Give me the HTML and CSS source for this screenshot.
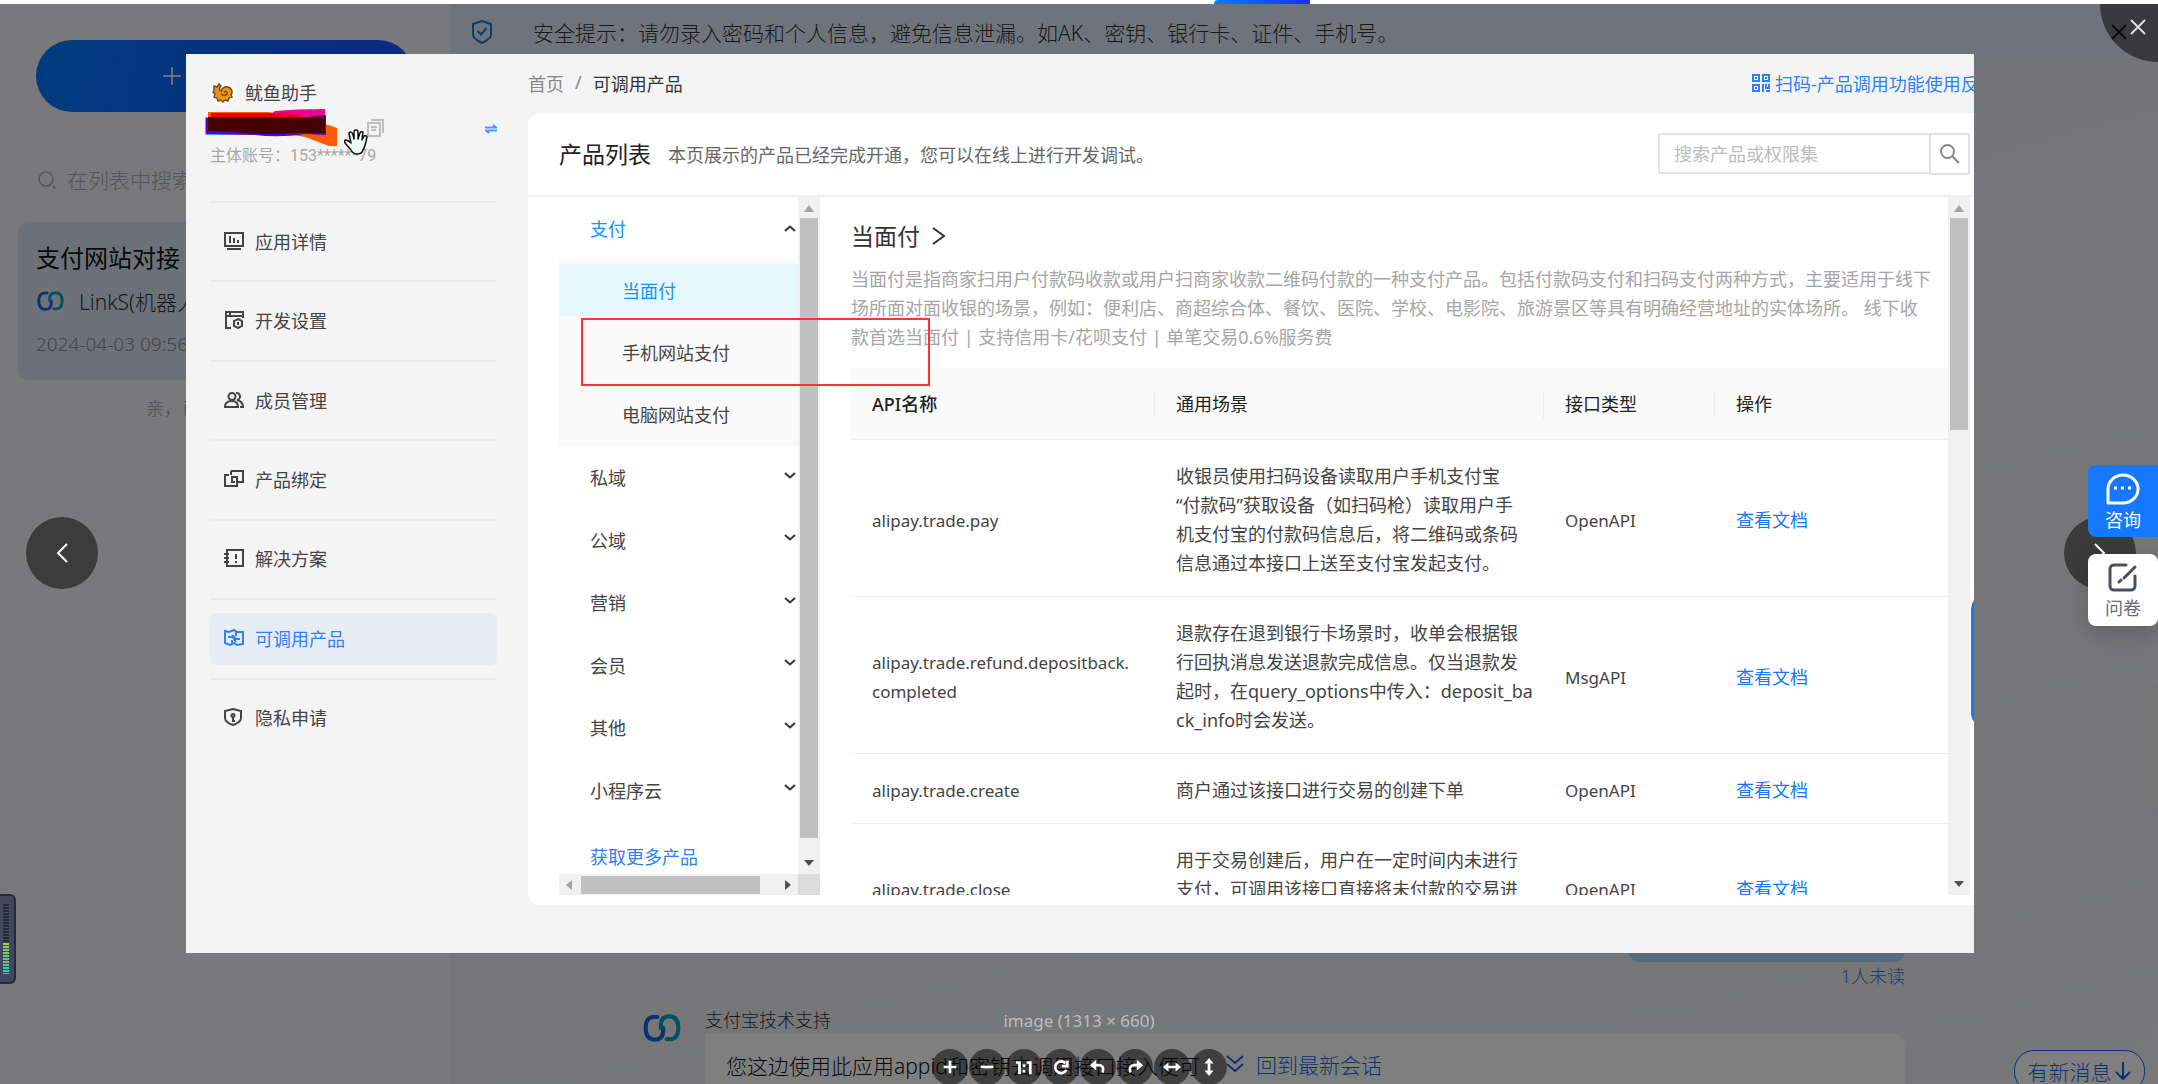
FILE: index.html
```html
<!DOCTYPE html>
<html lang="zh-CN">
<head>
<meta charset="utf-8">
<title>支付网站对接</title>
<link rel="stylesheet" href="styles.css">
</head>
<body>
<svg class="defs" aria-hidden="true">
  <symbol id="links" viewBox="0 0 32 24">
    <path d="M12 2.500Q2 1 2 12q0 10 8 10 7 0 7-8v-2" fill="none" stroke="#1268e0" stroke-width="3.500" stroke-linecap="round"/>
    <path d="M20 21.500Q30 23 30 12 30 2 22 2q-7 0-7 8v2" fill="none" stroke="#08a0c8" stroke-width="3.500" stroke-linecap="round"/>
  </symbol>
  <symbol id="chev" viewBox="0 0 12 7"><path d="M1 1l5 4.500L11 1" fill="none" stroke="currentColor" stroke-width="2"/></symbol>
</svg>

<header class="tabstrip"><span class="tab-mark"></span></header>
<div class="stage">
  <div class="app">
    <aside class="sessions">
      <button class="new-session" type="button" aria-label="新建会话"><svg viewBox="0 0 18 18" width="18" height="18"><path d="M9 0v18M0 9h18" stroke="#fff" stroke-width="1.500"/></svg></button>
      <label class="session-search">
        <svg viewBox="0 0 18 18" width="18" height="18"><path d="M15 15l2.500 2.500M15 8A7 7 0 1 1 1 8a7 7 0 0 1 14 0z" fill="none" stroke="#a8abb0" stroke-width="1.500"/></svg>
        <input type="text" placeholder="在列表中搜索" aria-label="在列表中搜索">
      </label>
      <article class="session">
        <h2>支付网站对接</h2>
        <p class="who"><span class="mini"><svg width="27" height="20"><use href="#links"/></svg></span>LinkS(机器人)</p>
        <time>2024-04-03 09:56</time>
      </article>
      <p class="list-end">亲，已经到底了</p>
    </aside>
    <main class="chat">
      <div class="notice">
        <svg viewBox="0 0 20 24" width="20" height="24"><path d="M10 1l9 3v11c0 3-5 6-9 8-4-2-9-5-9-8V4z M5.500 11l3.500 3.500L14.500 8" fill="none" stroke="#1478d8" stroke-width="2"/></svg>
        <p>安全提示：请勿录入密码和个人信息，避免信息泄漏。如AK、密钥、银行卡、证件、手机号。</p>
        <button type="button" aria-label="关闭提示"><svg viewBox="0 0 16 16" width="16" height="16"><path d="M1 1l14 14M15 1L1 15" stroke="#333" stroke-width="2"/></svg></button>
      </div>
      <div class="thread">
        <div class="mine"></div>
        <p class="unread">1人未读</p>
        <div class="msg">
          <span class="avatar"><svg width="42" height="28"><use href="#links"/></svg></span>
          <div class="msg-body">
            <p class="msg-name">支付宝技术支持</p>
            <p class="bubble">您这边使用此应用appid和密钥去调用接口接入便可</p>
          </div>
        </div>
      </div>
      <button class="latest" type="button"><svg viewBox="0 0 18 18" width="18" height="18"><path d="M1 1l8 7 8-7M1 9l8 7 8-7" fill="none" stroke="currentColor" stroke-width="2"/></svg>回到最新会话</button>
      <button class="new-msg" type="button">有新消息<svg viewBox="0 0 18 20" width="18" height="20"><path d="M9 1v17M2 11l7 7 7-7" fill="none" stroke="currentColor" stroke-width="2"/></svg></button>
      <span class="page-thumb"></span>
    </main>
  </div>

  <div class="viewer">
    <button class="viewer-close" type="button" aria-label="关闭"><svg viewBox="0 0 16 16" width="16" height="16"><path d="M1 1l14 14M15 1L1 15" stroke="#ddd" stroke-width="2"/></svg></button>
    <button class="viewer-nav prev" type="button" aria-label="上一张"><svg viewBox="0 0 12 20" width="12" height="20"><path d="M11 1L2 10l9 9" fill="none" stroke="#fff" stroke-width="2"/></svg></button>
    <button class="viewer-nav next" type="button" aria-label="下一张"><svg viewBox="0 0 12 20" width="12" height="20"><path d="M1 1l9 9-9 9" fill="none" stroke="#fff" stroke-width="2"/></svg></button>

    <section class="shot">
      <aside class="side">
        <div class="account">
          <p class="app-name"><span class="app-logo"><svg viewBox="0 0 22 20" width="22" height="20"><path d="M2 3l3 1 2-3 2 2c-2 2-2 4 0 5 1-3 4-5 7-4 4 1 5 5 3 8l1 2-3 1-1 3-3-1-2 2-2-2-3 1-1-3-3-1 1-3-2-2 1-2z" fill="#e89420" stroke="#7a4a14" stroke-width="1.500"/><path d="M12 9c2-1 4 0 3 2s-4 2-6 0" fill="none" stroke="#7a4a14" stroke-width="1.500"/></svg></span>鱿鱼助手</p>
          <div class="account-tools">
            <svg class="copy" viewBox="0 0 18 18" width="18" height="18"><path d="M4 1h12v13M1 4h12v13H1zM4 8h6M4 11h5" fill="none" stroke="#bdbdbd" stroke-width="2"/></svg>
            <svg class="swap" viewBox="0 0 12 10" width="12" height="10"><path d="M0 3.500h11L8 1M12 6.500H1L4 9" fill="none" stroke="#4d97ff" stroke-width="2"/></svg>
            <svg class="scribble" viewBox="0 0 134 38" width="134" height="38">
              <path d="M3 4h60l40 6 29 10v18h-8L100 29 3 14z" fill="#ff5a00"/>
              <path d="M70 3Q90 1 120 1v10H60z" fill="#f00090"/>
              <path d="M6 5h70q16 1 30 7v8H6z" fill="#f00000"/>
              <path d="M0 9h6v17H90v1H0z" fill="#3fb8f0"/>
              <path d="M1 10h20l84-1 16-2v20L100 26Q75 30 50 27L1 26z" fill="#5a00c8"/>
              <path d="M106 8l15-1v18l-15 1z" fill="#640078"/>
              <path d="M3 9h110l7 1v15H90Q60 27 40 25L3 23z" fill="#450000"/>
            </svg>
            <svg class="hand" viewBox="0 0 26 26" width="26" height="26"><path d="M8 21L2 14q-1-3 1-3 2 0 5 3L6 5q0-2 2-2 1 0 2 3l1 4V3q0-2 2-2t2 2v7l2-6q1-2 3-1l-1 8 2-4q2-1 3 1-2 10-4 13-1 4-6 4-4 0-6-4z" fill="#f2f9ff" stroke="#111" stroke-width="1.500" stroke-linejoin="round"/></svg>
          </div>
          <p class="account-id">主体账号：153******79</p>
        </div>
        <nav>
          <ul class="menu">
            <li><a href="#"><svg viewBox="0 0 20 18"><path d="M1 1h18v13H1zM3 17h14M6 4v7M10 6v5M14 8v3"/></svg>应用详情</a></li>
            <li><a href="#"><svg viewBox="0 0 20 18"><path d="M7 17H2V1h17v6M2 5h17M5 3h2M14 8l4 2v5l-4 2-4-2v-5zM14 11v3"/></svg>开发设置</a></li>
            <li><a href="#"><svg viewBox="0 0 20 18"><path d="M8 9a3.500 3.500 0 1 1 0-7 3.500 3.500 0 0 1 0 7zM1 16c0-4 3-6 7-6s6 2 6 6zM12 2a3.500 3.500 0 0 1 1 7c4 1 6 3 6 7h-3"/></svg>成员管理</a></li>
            <li><a href="#"><svg viewBox="0 0 20 18"><path d="M7 1h12v11h-6M5 5H1v11h12V7H8v5h3M7 5V1"/></svg>产品绑定</a></li>
            <li><a href="#"><svg viewBox="0 0 20 18"><path d="M3 1h16v16H3zM0 5h5M0 9h5M0 13h5M12 5v5M12 12v2"/></svg>解决方案</a></li>
            <li><a href="#" class="on"><svg viewBox="0 0 20 18"><path d="M1 2l4 1 5-2 3 2h6v12l-6 1-3-2-4 2-5-2zM4 8h6l-2-2M16 10h-6l2 3M12 3v4M8 11v4"/></svg>可调用产品</a></li>
            <li><a href="#"><svg viewBox="0 0 20 18"><path d="M9 1l8 2v7c0 3-4 6-8 7-4-1-8-4-8-7V3zM9 6a1.500 1.500 0 1 1 0 3 1.500 1.500 0 0 1 0-3zM9 9v4h2"/></svg>隐私申请</a></li>
          </ul>
        </nav>
      </aside>

      <div class="page">
        <div class="crumbs">
          <p><a href="#">首页</a><span>/</span><b>可调用产品</b></p>
          <a class="feedback" href="#"><svg viewBox="0 0 18 18" width="18" height="18"><path d="M1 1h6v6H1zM11 1h6v6h-6zM1 11h6v6H1zM3 4h2M13 4h2M3 14h2M11 10v8M14 10v4h3v-4M14 17h4" fill="none" stroke="currentColor" stroke-width="2"/></svg>扫码-产品调用功能使用反馈</a>
        </div>
        <div class="card">
          <div class="card-head">
            <h1>产品列表</h1>
            <p>本页展示的产品已经完成开通，您可以在线上进行开发调试。</p>
            <form class="search">
              <input type="text" placeholder="搜索产品或权限集" aria-label="搜索产品或权限集">
              <button type="button" aria-label="搜索"><svg viewBox="0 0 20 20" width="20" height="20"><path d="M12.500 12.500L19 19M14 7.500a6.500 6.500 0 1 1-13 0 6.500 6.500 0 0 1 13 0z" fill="none" stroke="#888" stroke-width="2"/></svg></button>
            </form>
          </div>
          <div class="card-body">
            <div class="cats">
              <div class="cats-view">
                <button class="cat open" type="button">支付<svg class="chev up"><use href="#chev"/></svg></button>
                <ul class="subs">
                  <li><a class="on" href="#">当面付</a></li>
                  <li><a href="#">手机网站支付</a></li>
                  <li><a href="#">电脑网站支付</a></li>
                </ul>
                <div class="cat-rest">
                  <button class="cat" type="button">私域<svg class="chev"><use href="#chev"/></svg></button>
                  <button class="cat" type="button">公域<svg class="chev"><use href="#chev"/></svg></button>
                  <button class="cat" type="button">营销<svg class="chev"><use href="#chev"/></svg></button>
                  <button class="cat" type="button">会员<svg class="chev"><use href="#chev"/></svg></button>
                  <button class="cat" type="button">其他<svg class="chev"><use href="#chev"/></svg></button>
                  <button class="cat" type="button">小程序云<svg class="chev"><use href="#chev"/></svg></button>
                </div>
                <a class="more" href="#">获取更多产品</a>
              </div>
              <div class="bar-v" aria-hidden="true"><i class="tri t-up dim"></i><i class="thumb long"></i><i class="tri t-down"></i></div>
              <div class="bar-h" aria-hidden="true"><i class="tri t-left dim"></i><i class="thumb"></i><i class="tri t-right"></i></div>
              <div class="corner"></div>
              <span class="mark"></span>
            </div>
            <div class="detail">
              <h2>当面付<svg viewBox="0 0 14 18" width="14" height="18"><path d="M1 1l11 8-11 8" fill="none" stroke="#333" stroke-width="2"/></svg></h2>
              <p class="desc">当面付是指商家扫用户付款码收款或用户扫商家收款二维码付款的一种支付产品。包括付款码支付和扫码支付两种方式，主要适用于线下<br>场所面对面收银的场景，例如：便利店、商超综合体、餐饮、医院、学校、电影院、旅游景区等具有明确经营地址的实体场所。 线下收<br>款首选当面付 | 支持信用卡/花呗支付 | 单笔交易0.6%服务费</p>
              <table>
                <colgroup><col class="c1"><col class="c2"><col class="c3"><col></colgroup>
                <thead><tr><th><span>API名称</span></th><th><span>通用场景</span></th><th><span>接口类型</span></th><th><span>操作</span></th></tr></thead>
                <tbody>
                  <tr><td>alipay.trade.pay</td><td>收银员使用扫码设备读取用户手机支付宝<br>“付款码”获取设备（如扫码枪）读取用户手<br>机支付宝的付款码信息后，将二维码或条码<br>信息通过本接口上送至支付宝发起支付。</td><td>OpenAPI</td><td><a href="#">查看文档</a></td></tr>
                  <tr><td>alipay.trade.refund.depositback.<br>completed</td><td>退款存在退到银行卡场景时，收单会根据银<br>行回执消息发送退款完成信息。仅当退款发<br>起时，在query_options中传入：deposit_ba<br>ck_info时会发送。</td><td>MsgAPI</td><td><a href="#">查看文档</a></td></tr>
                  <tr><td>alipay.trade.create</td><td>商户通过该接口进行交易的创建下单</td><td>OpenAPI</td><td><a href="#">查看文档</a></td></tr>
                  <tr><td>alipay.trade.close</td><td>用于交易创建后，用户在一定时间内未进行<br>支付，可调用该接口直接将未付款的交易进<br>行关闭</td><td>OpenAPI</td><td><a href="#">查看文档</a></td></tr>
                </tbody>
              </table>
            </div>
            <div class="bar-v right" aria-hidden="true"><i class="tri t-up dim"></i><i class="thumb"></i><i class="tri t-down"></i></div>
          </div>
        </div>
      </div>
      <span class="edge-tab"></span>
    </section>

    <footer class="viewer-foot">
      <p>image (1313 × 660)</p>
      <div class="tools">
        <button type="button" aria-label="放大"><svg viewBox="0 0 20 20"><path d="M10 3v14M3 10h14"/></svg></button>
        <button type="button" aria-label="缩小"><svg viewBox="0 0 20 20"><path d="M3 10h14"/></svg></button>
        <button type="button" aria-label="原始大小"><svg viewBox="0 0 20 20"><path d="M1 5h4v13M13 5h4v13M10 7v3M10 13v3"/></svg></button>
        <button type="button" aria-label="重置"><svg viewBox="0 0 20 20"><path d="M16 13a6.500 6.500 0 1 1-1-7M17 3v6h-6"/></svg></button>
        <button type="button" aria-label="向左旋转"><svg viewBox="0 0 20 20"><path d="M4 8h7c4 0 6 3 4 8"/><path d="M1 8l7-6v12z" class="f"/></svg></button>
        <button type="button" aria-label="向右旋转"><svg viewBox="0 0 20 20"><path d="M16 8H9c-4 0-6 3-4 8"/><path d="M19 8l-7-6v12z" class="f"/></svg></button>
        <button type="button" aria-label="水平翻转"><svg viewBox="0 0 20 20"><path d="M4 10h12"/><path d="M0 10l6-5v10zM20 10l-6-5v10z" class="f"/></svg></button>
        <button type="button" aria-label="垂直翻转"><svg viewBox="0 0 20 20"><path d="M10 4v12"/><path d="M10 0L5 6h10zM10 20l-5-6h10z" class="f"/></svg></button>
      </div>
    </footer>
  </div>

  <div class="floats">
    <button class="ask" type="button"><svg viewBox="0 0 34 34" width="34" height="34"><path d="M2 31V17A15 14 0 1 1 17 31z" fill="none" stroke="#fff" stroke-width="3" stroke-linejoin="round"/><path d="M8 16h3M15 16h3M22 16h3" stroke="#fff" stroke-width="3"/></svg>咨询</button>
    <button class="survey" type="button"><svg viewBox="0 0 30 30" width="30" height="30"><path d="M18 3H6a4 4 0 0 0-4 4v17a4 4 0 0 0 4 4h17a4 4 0 0 0 4-4V14M16 16L27 5M11 20l2-2" fill="none" stroke="#4a5060" stroke-width="3" stroke-linecap="round"/></svg>问卷</button>
  </div>
  <div class="meter" aria-hidden="true"><i></i><b></b></div>
</div>
</body>
</html>
```

FILE: styles.css
```css
* { box-sizing: border-box; }
body, h1, h2, p, ul { margin: 0; padding: 0; }
body {
  height: 100vh;
  display: flex;
  flex-direction: column;
  overflow: hidden;
  background: #fff;
  font-family: "Noto Sans", "Noto Sans CJK SC", sans-serif;
  font-size: 18px;
  color: #444;
}
ul { list-style: none; }
a { color: inherit; text-decoration: none; }
button, input { font: inherit; color: inherit; border: 0; background: none; padding: 0; }
svg { display: block; flex: none; }
.defs { position: absolute; width: 0; height: 0; }

.tabstrip { height: 4px; flex: none; display: flex; }
.tab-mark { width: 96px; margin-left: 56.25%; background: linear-gradient(90deg, #0a7cff, #1a2cff); border-radius: 4px 0 0 0; }
.stage { position: relative; flex: 1; min-height: 0; overflow: hidden; }

/* chat application behind the mask */
.app { display: flex; height: 100%; background: #f2f3f7; font-size: 21px; font-weight: 300; }
.sessions { width: 450px; flex: none; display: flex; flex-direction: column; padding: 36px 18px 0; }
.new-session {
  height: 72px; margin: 0 18px; padding-left: 127px; border-radius: 36px;
  display: flex; align-items: center; justify-content: flex-start;
  background: linear-gradient(100deg, #0078ff, #1a50ff);
}
.session-search { display: flex; align-items: center; gap: 11px; height: 60px; margin: 38px 0 12px; padding-left: 20px; }
.session-search input { flex: 1; min-width: 0; }
.session-search input::placeholder { color: #a8abb0; opacity: 1; }
.session { height: 158px; padding: 18px 18px 0; border-radius: 10px; background: #d9e3f3; color: #333; }
.session h2 { font-size: 24px; line-height: 36px; font-weight: 400; color: #111; }
.who { display: flex; align-items: center; gap: 14px; height: 50px; }
.mini { width: 29px; height: 29px; border-radius: 50%; background: #e2e6ee; display: flex; align-items: center; justify-content: center; }
.session time { display: block; font-size: 19px; line-height: 36px; color: #858a94; }
.list-end { font-size: 18px; line-height: 28px; padding: 14px 0 0 128px; color: #a0a2a8; }
.chat {
  position: relative; flex: 1; min-width: 0; display: flex; flex-direction: column;
  background: linear-gradient(165deg, #e8ebf2, #e4e9f1 30%, #ecedf1 60%, #eef0f2);
}
.notice { height: 56px; flex: none; display: flex; align-items: center; padding: 0 31px 0 22px; background: #dfe9f8; border-bottom: 1px solid #e9e4e0; }
.notice p { flex: 1; margin-left: 41px; color: #333; }
.thread { margin-top: auto; padding: 0 253px 0 190px; display: flex; flex-direction: column; }
.mine { align-self: flex-end; width: 277px; height: 60px; border-radius: 12px; background: #b0d4f8; }
.unread { align-self: flex-end; font-size: 18px; line-height: 28px; color: #3a78d8; }
.msg { display: flex; gap: 21px; margin-top: 16px; height: 78px; overflow: hidden; }
.avatar { width: 44px; height: 44px; border-radius: 50%; border: 1px solid #f4f0ec; display: flex; align-items: center; justify-content: center; flex: none; }
.msg-body { flex: 1; }
.msg-name { font-size: 18px; line-height: 28px; color: #333; }
.bubble { padding: 16px 21px; line-height: 32px; border-radius: 0 12px 0 0; background: #fff; color: #111; }
.latest {
  position: absolute; left: 50%; bottom: 0; transform: translateX(-50%);
  display: flex; align-items: center; gap: 12px; height: 40px; padding: 0 12px;
  background: #fff; color: #1666e8; white-space: nowrap;
}
.new-msg {
  position: absolute; right: 13px; bottom: -8px; height: 42px; width: 131px;
  display: flex; align-items: center; justify-content: center; gap: 2px;
  border: 1px solid #1666e8; border-radius: 20px; background: #fff; color: #1666e8; white-space: nowrap;
}
.page-thumb { position: absolute; right: 0; bottom: 273px; width: 7px; height: 125px; background: #ebebeb; }

/* picture viewer */
.viewer { position: absolute; inset: 0; display: flex; flex-direction: column; background: rgba(0, 0, 0, .5); overflow: hidden; }
.viewer-close { position: absolute; right: -58px; top: -58px; width: 116px; height: 116px; border-radius: 50%; background: rgba(0, 0, 0, .5); }
.viewer-close svg { position: absolute; left: 30px; bottom: 27px; }
.viewer-nav { position: absolute; top: 513px; width: 72px; height: 72px; border-radius: 50%; background: rgba(0, 0, 0, .5); display: flex; align-items: center; justify-content: center; }
.prev { left: 26px; }
.next { right: 22px; }
.viewer-foot { flex: none; height: 131px; padding-top: 56px; display: flex; flex-direction: column; align-items: center; gap: 16px; }
.viewer-foot p { font-size: 17px; line-height: 24px; color: #bcbdbf; }
.tools { display: flex; gap: 1px; }
.tools button { width: 36px; height: 36px; border-radius: 50%; background: rgba(0, 0, 0, .5); display: flex; align-items: center; justify-content: center; }
.tools svg { width: 18px; height: 18px; fill: none; stroke: #fff; stroke-width: 3; }
.tools .f { fill: #fff; stroke: none; }

.shot { position: relative; flex: 1; min-height: 0; margin: 50px 184px 0 186px; display: flex; overflow: hidden; background: #f4f4f4; }
.side { width: 342px; flex: none; padding: 25px 31px 0 24px; }
.account { height: 122px; }
.app-name { display: flex; align-items: center; gap: 9px; line-height: 28px; }
.app-logo { width: 26px; height: 26px; border-radius: 50%; background: #fff; display: flex; align-items: center; justify-content: center; }
.account-tools { position: relative; height: 36px; display: flex; align-items: center; justify-content: flex-end; }
.scribble { position: absolute; left: -5px; top: 1px; }
.hand { position: absolute; left: 133px; top: 22px; }
.copy { position: absolute; left: 157px; top: 12px; }
.swap { margin-top: 8px; }
.account-id { font-family: Roboto, "Noto Sans CJK SC", sans-serif; font-size: 16px; line-height: 26px; color: #a8a8a8; }
.menu { display: grid; grid-auto-rows: 1fr; height: 556px; }
.menu li { border-top: 2px solid #ebebeb; display: flex; align-items: center; }
.menu a { flex: 1; height: 52px; padding: 0 0 2px 14px; border-radius: 6px; display: flex; align-items: center; gap: 11px; }
.menu svg { width: 20px; height: 18px; fill: none; stroke: currentColor; stroke-width: 2; }
.menu .on { background: #e8edf5; color: #2f80ff; }

.page { flex: 1; min-width: 0; display: flex; flex-direction: column; padding-bottom: 48px; }
.crumbs { height: 59px; flex: none; display: flex; align-items: center; justify-content: space-between; padding-bottom: 2px; white-space: nowrap; }
.crumbs p { display: flex; gap: 11px; color: #888; }
.crumbs b { font-weight: 400; color: #333; }
.feedback { display: flex; align-items: center; gap: 5px; width: 222px; color: #2f80ff; }
.card { flex: 1; min-height: 0; display: flex; flex-direction: column; background: #fff; border-radius: 12px 0 0 12px; padding-bottom: 10px; }
.card-head { height: 84px; flex: none; display: flex; align-items: center; padding: 0 4px 0 31px; border-bottom: 2px solid #f0f0f0; }
.card-head h1 { font-size: 23px; line-height: 36px; font-weight: 400; color: #222; }
.card-head p { margin-left: 17px; color: #666; white-space: nowrap; }
.search { margin-left: auto; display: flex; }
.search input { width: 271px; height: 41px; padding: 0 14px; border: 2px solid #e4e4e4; border-right: 0; border-radius: 3px 0 0 3px; background: #fff; }
.search input::placeholder { color: #bcbcbc; opacity: 1; }
.search button { width: 41px; height: 42px; border: 2px solid #e0e0e0; border-radius: 0 3px 3px 0; display: flex; align-items: center; justify-content: center; }
.card-body { flex: 1; min-height: 0; display: flex; padding: 0 4px 0 31px; }

.cats { position: relative; flex: none; display: grid; grid-template: minmax(0, 1fr) 21px / 239px 22px; }
.cats-view { overflow: hidden; }
.cat { width: 100%; display: flex; align-items: center; justify-content: space-between; padding: 0 2px 0 31px; text-align: left; }
.cat.open { height: 62px; color: #1890ff; }
.chev { width: 12px; height: 7px; color: #333; margin-bottom: 4px; }
.chev.up { transform: rotate(180deg); margin: 0; }
.subs { display: grid; grid-template-rows: repeat(3, 62px); padding-bottom: 1px; background: #fafafa; }
.subs a { display: flex; align-items: center; height: 52px; padding-left: 63px; }
.subs li { display: flex; flex-direction: column; justify-content: center; }
.subs .on { background: #e6f7ff; color: #1890ff; }
.cat-rest { display: grid; grid-auto-rows: 1fr; height: 375px; }
.more { display: block; padding: 22px 0 0 31px; line-height: 28px; color: #2f80ff; }
.bar-v { width: 22px; background: #f1f1f1; display: flex; flex-direction: column; align-items: center; padding: 8px 0; }
.bar-h { background: #f1f1f1; display: flex; align-items: center; padding: 0 7px; }
.corner { background: #dcdcdc; }
.thumb { background: #c1c1c1; }
.bar-v .thumb { width: 18px; height: 212px; margin: 6px 0 auto; }
.bar-v .thumb.long { flex: 1; margin-bottom: 22px; }
.bar-h .thumb { height: 18px; width: 179px; margin: 0 auto 0 9px; }
.tri { width: 0; height: 0; border: 5px solid transparent; }
.t-up { border-top: 0; border-bottom: 7px solid #505050; }
.t-down { border-bottom: 0; border-top: 6px solid #505050; }
.t-left { border-left: 0; border-right: 6px solid #505050; }
.t-right { border-right: 0; border-left: 6px solid #505050; }
.t-up.dim { border-bottom-color: #a3a3a3; }
.t-left.dim { border-right-color: #a3a3a3; }
.mark { position: absolute; left: 22px; top: 121px; width: 349px; height: 68px; border: 2px solid #f33; z-index: 1; }

.detail { flex: 1; min-width: 0; margin-left: 31px; overflow: hidden; }
.detail h2 { display: flex; align-items: center; gap: 12px; margin-top: 21px; font-size: 23px; line-height: 36px; font-weight: 400; color: #333; }
.desc { margin-top: 11px; line-height: 29px; color: #a6a6a6; white-space: nowrap; }
table { width: 100%; margin-top: 16px; table-layout: fixed; border-collapse: collapse; line-height: 29px; }
.c1 { width: 304px; }
.c2 { width: 389px; }
.c3 { width: 171px; }
th { padding: 22px 0 20px; text-align: left; font-weight: 400; background: #fafafa; color: #222; border-bottom: 1px solid #f0f0f0; }
th:first-child { font-weight: 500; }
th span { display: block; padding-left: 21px; border-right: 1px solid #f0f0f0; }
th:last-child span { border: 0; }
td { padding: 22px 0 18px 21px; border-bottom: 1px solid #f0f0f0; white-space: nowrap; }
td:first-child, td:nth-child(3) { font-size: 17px; }
td a { color: #1677ff; }
.edge-tab { position: absolute; right: -27px; top: 541px; width: 30px; height: 132px; border-radius: 14px; background: #1677ff; }

/* floating widgets above the mask */
.floats { position: absolute; right: 0; top: 461px; display: flex; flex-direction: column; gap: 17px; }
.floats button { width: 70px; height: 72px; display: flex; flex-direction: column; align-items: center; justify-content: center; gap: 2px; padding-top: 2px; line-height: 24px; border-radius: 8px 0 0 8px; }
.floats .ask { background: #1677ff; color: #fff; }
.floats .survey { background: #fff; color: #666b78; border-radius: 8px; box-shadow: 0 8px 24px rgba(0, 0, 0, .2); gap: 4px; }
.meter { position: absolute; left: 0; bottom: 100px; width: 16px; height: 90px; padding: 8px 5px 8px 3px; display: flex; flex-direction: column; background: #404860; border: 2px solid #262a3a; border-left: 0; border-radius: 0 6px 6px 0; }
.meter i { flex: 5; background: repeating-linear-gradient(#262a3a 0 2px, #404860 2px 3px); }
.meter b { flex: 4; background: repeating-linear-gradient(transparent 0 2px, #404860 2px 3px), linear-gradient(#a8c850, #30c8b0); }
```
